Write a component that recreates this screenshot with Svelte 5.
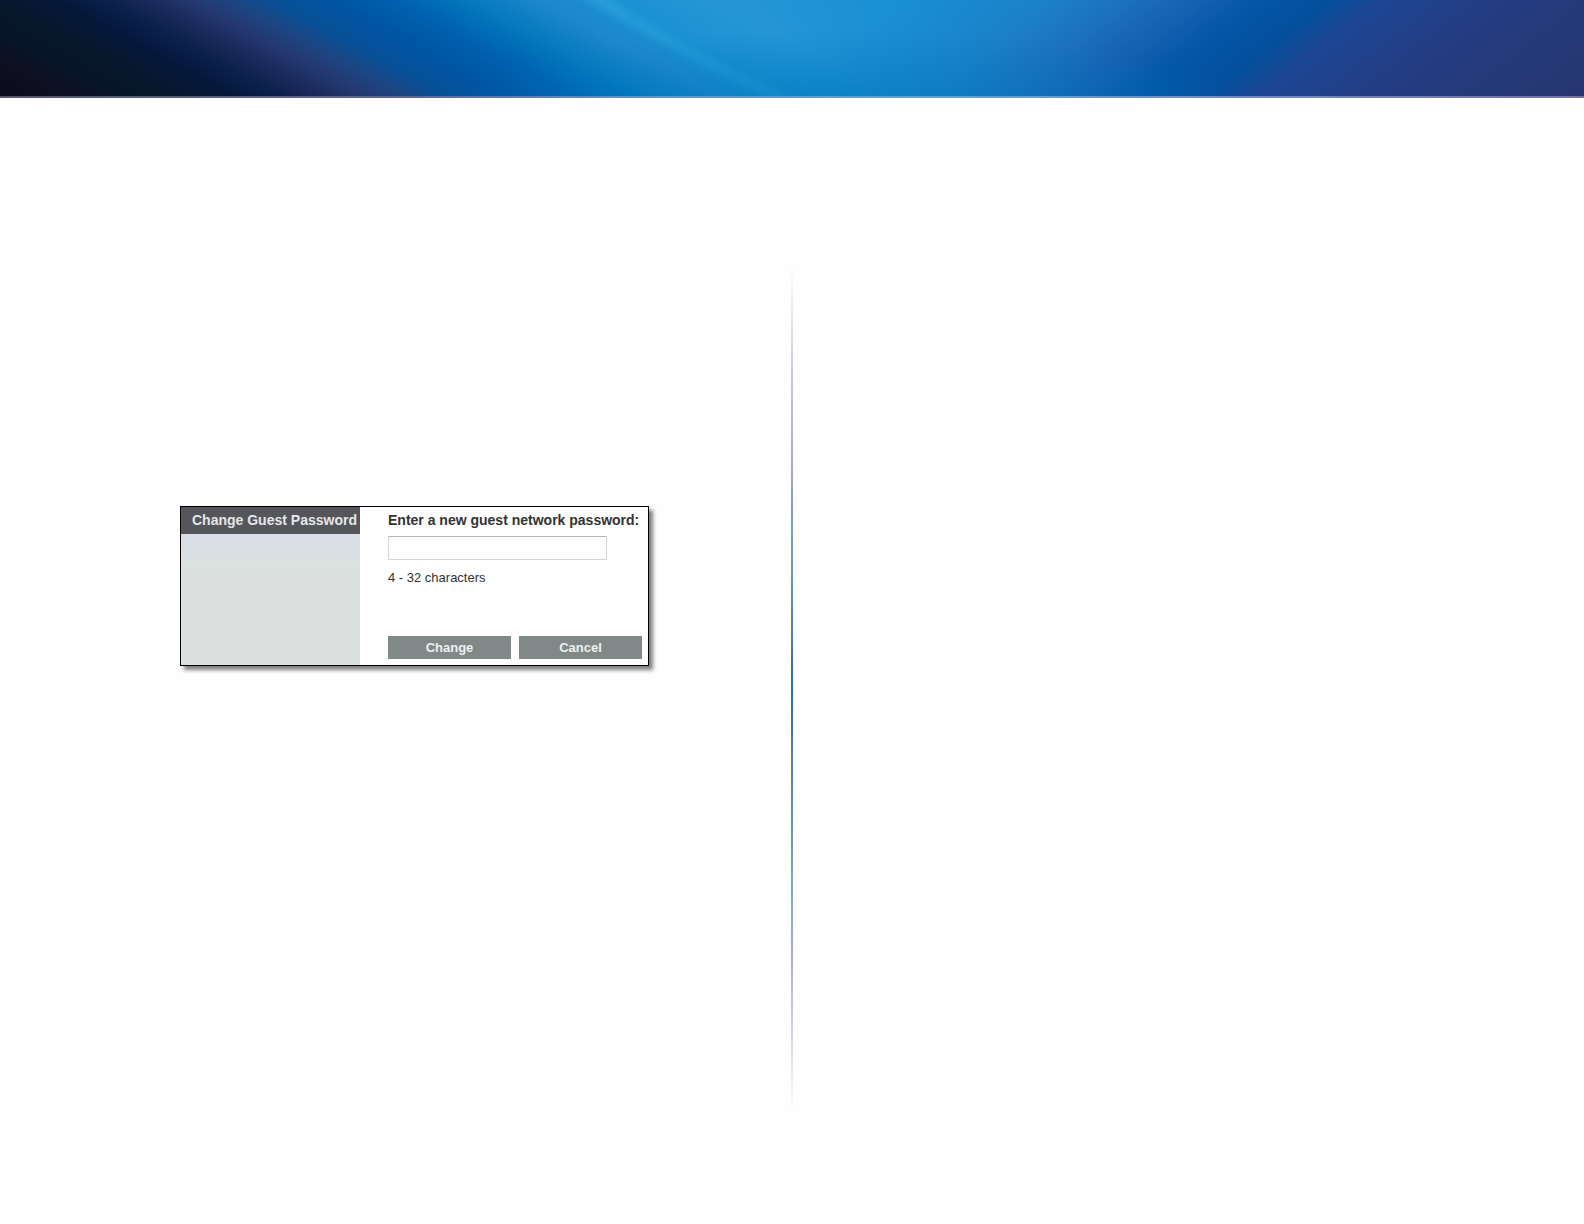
<script>
  let password = $state('');

  // banner colours along its top edge, [x, colour]
  const stops = [
    [-200, '#08091a'], [-110, '#100f20'], [-60, '#07142a'], [0, '#07182c'], [60, '#05183c'],
    [100, '#0a1f4a'], [150, '#1b2a5c'], [190, '#243870'], [230, '#1d4482'], [270, '#095096'],
    [330, '#0054a4'], [400, '#0062b0'], [450, '#0074bb'], [500, '#1080c5'], [540, '#1e87cb'],
    [600, '#1a90d1'], [720, '#2697d6'], [800, '#2193d4'], [900, '#1a8fd4'], [980, '#1a87ce'],
    [1054, '#1c80c7'], [1130, '#1c70bc'], [1200, '#1560b1'], [1260, '#0356a8'], [1330, '#044f9c'],
    [1380, '#1c4693'], [1450, '#22408a'], [1520, '#243b80'], [1584, '#253a79'], [1700, '#263572'],
    [1784, '#2a3070']
  ];
</script>

<div class="page">
  <header class="banner">
    <svg viewBox="0 0 1584 96" preserveAspectRatio="none" aria-hidden="true">
      <defs>
        <linearGradient id="left" gradientUnits="userSpaceOnUse" x1="-200" x2="1784" gradientTransform="skewX(61)">
          {#each stops as [x, color]}
            <stop offset={(x + 200) / 1984} stop-color={color} />
          {/each}
        </linearGradient>
        <linearGradient id="right" gradientUnits="userSpaceOnUse" x1="-200" x2="1784" gradientTransform="skewX(-52)">
          {#each stops as [x, color]}
            <stop offset={(x + 200) / 1984} stop-color={color} />
          {/each}
        </linearGradient>
        <linearGradient id="blend">
          <stop offset="0.46" stop-color="#000" />
          <stop offset="0.62" stop-color="#fff" />
        </linearGradient>
        <radialGradient id="shade" gradientUnits="userSpaceOnUse" cx="0" cy="0" r="1" gradientTransform="translate(850 120) scale(420 90)">
          <stop offset="0" stop-color="#0078c0" stop-opacity="0.8" />
          <stop offset="1" stop-color="#0078c0" stop-opacity="0" />
        </radialGradient>
        <linearGradient id="streak">
          <stop offset="0" stop-color="#38aee6" stop-opacity="0.5" />
          <stop offset="1" stop-color="#20a0d0" stop-opacity="0.15" />
        </linearGradient>
        <mask id="mask-right"><rect width="1584" height="96" fill="url(#blend)" /></mask>
        <filter id="soft"><feGaussianBlur stdDeviation="3" /></filter>
      </defs>
      <rect width="1584" height="96" fill="url(#left)" />
      <rect width="1584" height="96" fill="url(#right)" mask="url(#mask-right)" />
      <rect width="1584" height="96" fill="url(#shade)" />
      <path d="M580 -4 L606 -4 Q680 48 800 100 L770 100 Q670 50 580 -4 Z" fill="url(#streak)" filter="url(#soft)" />
    </svg>
  </header>

  <main class="content">
    <section class="column">
      <form class="panel" onsubmit={(e) => e.preventDefault()}>
        <div class="sidebar">
          <h2>Change Guest Password</h2>
        </div>
        <div class="fields">
          <label for="guest-password">Enter a new guest network password:</label>
          <input id="guest-password" type="text" maxlength="32" bind:value={password} />
          <p>4 - 32 characters</p>
          <div class="actions">
            <button type="submit">Change</button>
            <button type="button" onclick={() => (password = '')}>Cancel</button>
          </div>
        </div>
      </form>
    </section>
    <div class="divider"></div>
    <section class="column"></section>
  </main>
</div>

<style>
  :global(body) {
    margin: 0;
    background: #fefefe;
  }

  .page {
    display: flex;
    flex-direction: column;
    min-height: 100vh;
    font-family: "Liberation Sans", Arial, sans-serif;
    font-size: 13px;
    color: #333;
  }

  .banner {
    border-bottom: 2px solid #6d8fc4;
    border-image: linear-gradient(to right, #55566a, #5b6694 25%, #5b93d0 40%, #5ba3dc 60%, #6c8fc8 75%, #7470a4) 1;
  }

  .banner svg {
    display: block;
    width: 100%;
    height: 96px;
  }

  .content {
    flex: 1;
    display: grid;
    grid-template-columns: 1fr 2px 1fr;
    padding: 170px 0 114px;
  }

  .divider {
    background: linear-gradient(
      #fefefe,
      #e4e4ea 6%,
      #c4c2dc 14%,
      #a9a3cd 25%,
      #7f9fc6 27%,
      #6f9cc8 34%,
      #4a78b0 45%,
      #2a6fa8 50%,
      #4a78b0 56%,
      #7096c6 68%,
      #8cb0d8 79%,
      #aaa8d0 81%,
      #c8c6da 88%,
      #e6e6ea 95%,
      #fefefe
    );
  }

  .column {
    display: flex;
    justify-content: flex-end;
    align-items: flex-start;
    padding: 238px 142px 0 24px;
  }

  .panel {
    display: flex;
    box-sizing: border-box;
    width: 469px;
    border: 1px solid #000;
    background: #fefefe;
    box-shadow: 4px 4px 4px rgba(0, 0, 0, 0.5);
  }

  .sidebar {
    width: 179px;
    flex-shrink: 0;
    background: linear-gradient(#dadde8 28px, #dadfe4 44px, #dce1e0 60px);
  }

  h2 {
    margin: 0;
    padding-left: 11px;
    background: #54565b;
    color: #e6e6e8;
    font-size: 14px;
    line-height: 27px;
    white-space: nowrap;
  }

  .fields {
    flex: 1;
    padding: 5px 6px 6px 28px;
  }

  label {
    display: block;
    font-size: 14px;
    font-weight: bold;
    line-height: 16px;
    white-space: nowrap;
  }

  input {
    display: block;
    box-sizing: border-box;
    width: 219px;
    height: 24px;
    margin: 8px 0 10px;
    padding: 2px 4px;
    border: 1px solid #d6d6d6;
    border-top-color: #b8b8b8;
    background: #fefefe;
    font: inherit;
  }

  p {
    margin: 0;
    line-height: 16px;
  }

  .actions {
    display: flex;
    gap: 8px;
    margin-top: 50px;
  }

  button {
    flex: 1;
    height: 23px;
    padding: 0;
    border: 0;
    background: #808888;
    color: #eef0f0;
    font: bold 13px "Liberation Sans", Arial, sans-serif;
  }
</style>
